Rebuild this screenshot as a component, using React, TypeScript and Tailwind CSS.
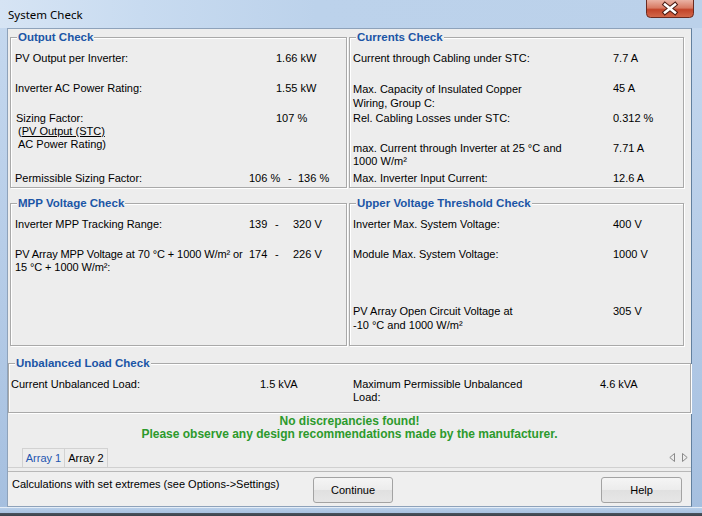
import type { ReactNode } from "react";

function GroupBox({ title, className, children }: { title: string; className: string; children: ReactNode }) {
  return (
    <div className={`shrink-0 border border-[#a9a9a9] shadow-[inset_1px_1px_0_#ffffff,1px_1px_0_#ffffff] ${className}`}>
      <div className="-mt-[7px] ml-[6px] w-fit bg-[#ededed] px-px text-[11.5px] font-bold leading-[13px] text-[#1b55a6]">{title}</div>
      {children}
    </div>
  );
}

function Row({ h, w, label, value }: { h: string; w: string; label: ReactNode; value?: ReactNode }) {
  return (
    <div className={`flex ${h}`}>
      <div className={`${w} shrink-0 whitespace-nowrap`}>{label}</div>
      <div className="whitespace-nowrap">{value}</div>
    </div>
  );
}

function CloseButton() {
  return (
    <svg width="48" height="18" viewBox="0 0 48 18" className="mr-[8px] shrink-0">
      <defs>
        <linearGradient id="cb" x1="0" y1="0" x2="0" y2="1">
          <stop offset="0" stopColor="#eab2a4" />
          <stop offset="0.45" stopColor="#d87a63" />
          <stop offset="0.55" stopColor="#c2442a" />
          <stop offset="1" stopColor="#d36a4c" />
        </linearGradient>
      </defs>
      <path d="M0.5 0 V13.5 Q0.5 17.5 4.5 17.5 H43.5 Q47.5 17.5 47.5 13.5 V0" fill="url(#cb)" stroke="#6a2b21" />
      <path d="M19 4.5 L29 12.5 M29 4.5 L19 12.5" stroke="#4a1a12" strokeWidth="4.6" strokeLinecap="square" />
      <path d="M19 4.5 L29 12.5 M29 4.5 L19 12.5" stroke="#ffffff" strokeWidth="2.6" strokeLinecap="square" />
    </svg>
  );
}

function TabArrows() {
  return (
    <div className="ml-auto mr-[3px] flex items-center gap-[7px]">
      <svg width="6" height="9" viewBox="0 0 6 9">
        <path d="M5.5 0.5 L0.8 4.5 L5.5 8.5 Z" fill="none" stroke="#8a8a8a" />
      </svg>
      <svg width="6" height="9" viewBox="0 0 6 9">
        <path d="M0.5 0.5 L5.2 4.5 L0.5 8.5 Z" fill="none" stroke="#8a8a8a" />
      </svg>
    </div>
  );
}

function WinButton({ children, w }: { children: ReactNode; w: string }) {
  return (
    <button
      className={`${w} h-[26px] shrink-0 rounded-[3px] border border-[#a3a3a3] bg-[linear-gradient(180deg,#f5f5f5_0%,#ececec_50%,#e0e0e0_51%,#e6e6e6_100%)] text-center leading-[13px] text-black`}
    >
      {children}
    </button>
  );
}

export default function App() {
  return (
    <div className="flex h-[516px] w-[702px] flex-col overflow-hidden bg-[linear-gradient(180deg,#c6d9ef_0%,#b3cae6_60%,#a5bfdf_100%)] font-['Liberation_Sans',Arial,sans-serif] text-[11px] leading-[13px] text-black">
      {/* title bar */}
      <div className="flex h-[28px] shrink-0 items-start justify-between bg-[linear-gradient(90deg,#d6e4f4_0%,#c8dbf0_20%,#bcd2eb_45%,#bbd1ea_100%)]">
        <div className="flex h-[28px] items-center pl-[8px] font-['Noto_Sans',sans-serif] text-[11.5px] text-black">System Check</div>
        <CloseButton />
      </div>

      <div className="flex shrink-0 pl-[7px] pr-[10px]">
        {/* client area */}
        <div className="flex h-[479px] w-[685px] flex-col border border-[#8ea2ba] border-r-[#62809f] bg-[#ededed]">
          {/* first row of checks */}
          <div className="ml-[2px] mt-[8px] flex gap-[2px]">
            <GroupBox title="Output Check" className="h-[151px] w-[337px]">
              <div className="mt-[8px] pl-[4px]">
                <Row h="h-[30px]" w="w-[261px]" label="PV Output per Inverter:" value="1.66 kW" />
                <Row h="h-[30px]" w="w-[261px]" label="Inverter AC Power Rating:" value="1.55 kW" />
                <Row
                  h="h-[60px]"
                  w="w-[261px]"
                  label={
                    <div className="pl-px">
                      <div>Sizing Factor:</div>
                      <div className="pl-[2px]">
                        (<span className="underline underline-offset-[1px]">PV Output (STC)</span>
                      </div>
                      <div className="pl-[2px]">AC Power Rating)</div>
                    </div>
                  }
                  value="107 %"
                />
                <div className="flex h-[13px] whitespace-nowrap">
                  <div className="w-[234px] shrink-0">Permissible Sizing Factor:</div>
                  <div className="w-[39px] shrink-0">106 %</div>
                  <div className="w-[10px] shrink-0">-</div>
                  <div>136 %</div>
                </div>
              </div>
            </GroupBox>

            <GroupBox title="Currents Check" className="h-[151px] w-[335px]">
              <div className="mt-[8px] pl-[3px]">
                <Row h="h-[30px]" w="w-[260px]" label="Current through Cabling under STC:" value="7.7 A" />
                <Row
                  h="h-[30px]"
                  w="w-[260px]"
                  label={
                    <div className="leading-[14px]">
                      Max. Capacity of Insulated Copper
                      <br />
                      Wiring, Group C:
                    </div>
                  }
                  value="45 A"
                />
                <Row h="h-[30px]" w="w-[260px]" label="Rel. Cabling Losses under STC:" value="0.312 %" />
                <Row
                  h="h-[30px]"
                  w="w-[260px]"
                  label={
                    <div>
                      max. Current through Inverter at 25 °C and
                      <br />
                      1000 W/m²
                    </div>
                  }
                  value="7.71 A"
                />
                <Row h="h-[13px]" w="w-[260px]" label="Max. Inverter Input Current:" value="12.6 A" />
              </div>
            </GroupBox>
          </div>

          {/* second row of checks */}
          <div className="ml-[2px] mt-[15px] flex gap-[2px]">
            <GroupBox title="MPP Voltage Check" className="h-[143px] w-[337px]">
              <div className="mt-[8px] pl-[4px]">
                <div className="flex h-[30px] whitespace-nowrap">
                  <div className="w-[234px] shrink-0">Inverter MPP Tracking Range:</div>
                  <div className="w-[26px] shrink-0">139</div>
                  <div className="w-[18px] shrink-0">-</div>
                  <div>320 V</div>
                </div>
                <div className="flex h-[30px] whitespace-nowrap">
                  <div className="w-[234px] shrink-0 tracking-[-0.1px]">
                    PV Array MPP Voltage at 70 °C + 1000 W/m² or
                    <br />
                    15 °C + 1000 W/m²:
                  </div>
                  <div className="w-[26px] shrink-0">174</div>
                  <div className="w-[18px] shrink-0">-</div>
                  <div>226 V</div>
                </div>
              </div>
            </GroupBox>

            <GroupBox title="Upper Voltage Threshold Check" className="h-[143px] w-[335px]">
              <div className="mt-[8px] pl-[3px]">
                <Row h="h-[30px]" w="w-[260px]" label="Inverter Max. System Voltage:" value="400 V" />
                <Row h="h-[56px]" w="w-[260px]" label="Module Max. System Voltage:" value="1000 V" />
                <Row
                  h="h-[28px]"
                  w="w-[260px]"
                  label={
                    <div className="leading-[14px]">
                      PV Array Open Circuit Voltage at
                      <br />
                      -10 °C and 1000 W/m²
                    </div>
                  }
                  value={<div className="leading-[14px]">305 V</div>}
                />
              </div>
            </GroupBox>
          </div>

          {/* unbalanced load */}
          <GroupBox title="Unbalanced Load Check" className="mt-[17px] h-[50px] w-[683px]">
            <div className="mt-[8px] flex whitespace-nowrap pl-[2px]">
              <div className="w-[249px] shrink-0">Current Unbalanced Load:</div>
              <div className="w-[93px] shrink-0">1.5 kVA</div>
              <div className="w-[247px] shrink-0">
                Maximum Permissible Unbalanced
                <br />
                Load:
              </div>
              <div>4.6 kVA</div>
            </div>
          </GroupBox>

          {/* result */}
          <div className="mt-[2px] text-center text-[12px] font-bold leading-[13px] text-[#2c9a2c]">
            <div>No discrepancies found!</div>
            <div>Please observe any design recommendations made by the manufacturer.</div>
          </div>

          {/* tabs */}
          <div className="mt-[7px] flex items-center border-b border-[#d0d0d0]">
            <div className="ml-[14px] flex">
              <div className="flex h-[19px] w-[43px] items-center justify-center border-x border-t border-[#d2d2d2] text-[#1f56b0]">
                Array 1
              </div>
              <div className="flex h-[19px] w-[43px] items-center justify-center border-r border-t border-[#d2d2d2]">
                Array 2
              </div>
            </div>
            <TabArrows />
          </div>

          {/* status bar */}
          <div className="mt-[3px] flex flex-1 items-start border-t border-[#b8b8b8] bg-[#efefef] pt-[5px]">
            <div className="w-[305px] shrink-0 whitespace-nowrap pl-[4px] pt-px">
              Calculations with set extremes (see Options-&gt;Settings)
            </div>
            <WinButton w="w-[80px]">Continue</WinButton>
            <div className="w-[208px] shrink-0" />
            <WinButton w="w-[81px]">Help</WinButton>
          </div>
        </div>
      </div>

      {/* bottom frame */}
      <div className="flex-1 border-t border-[#e4edf7] bg-[linear-gradient(180deg,#b8cfe9_0%,#a9c2e1_60%,#4b5560_62%,#3c434c_100%)]" />
    </div>
  );
}
